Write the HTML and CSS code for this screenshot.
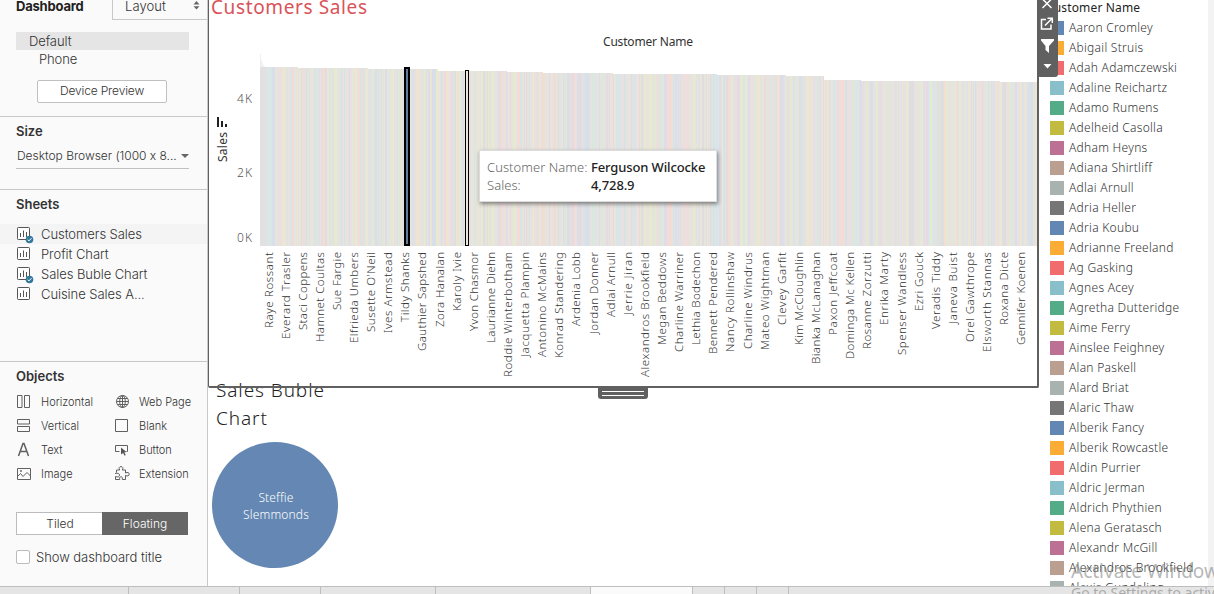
FILE: index.html
```
<!DOCTYPE html>
<html lang="en">
<head>
<meta charset="utf-8">
<title>Dashboard</title>
<link rel="stylesheet" href="styles.css">
</head>
<body>
<div class="app">
  <div class="workspace">
    <aside class="sidebar">
      <section class="panel panel-device">
        <div class="tabs">
          <div class="tab-active">Dashboard</div>
          <div class="tab-layout"><span>Layout</span>
            <svg width="7" height="9" viewBox="0 0 7 9"><path d="M3.5 0L6.5 3.4H.5zM3.5 8.6L6.5 5.2H.5z" fill="#666"/></svg>
          </div>
        </div>
        <div class="device selected">Default</div>
        <div class="device phone">Phone</div>
        <div class="preview">Device Preview</div>
      </section>
      <section class="panel panel-size">
        <h2>Size</h2>
        <div class="select"><span>Desktop Browser (1000 x 8...</span><i class="caret"></i></div>
      </section>
      <section class="panel panel-sheets">
        <h2>Sheets</h2>
        <div class="sheet hover"><svg class="ic"><use href="#sheet"/><use href="#check"/></svg><span>Customers Sales</span></div>
        <div class="sheet"><svg class="ic"><use href="#sheet"/></svg><span>Profit Chart</span></div>
        <div class="sheet"><svg class="ic"><use href="#sheet"/><use href="#check"/></svg><span>Sales Buble Chart</span></div>
        <div class="sheet"><svg class="ic"><use href="#sheet"/></svg><span>Cuisine Sales A...</span></div>
      </section>
      <section class="panel panel-objects">
        <h2>Objects</h2>
        <div class="objects">
          <div class="object"><svg class="ic line"><path d="M1.500 1.500h4.500v12h-4.500zM8.500 1.500h5v12h-5z"/></svg>Horizontal</div>
          <div class="object"><svg class="ic line"><circle cx="8.500" cy="7.500" r="6"/><ellipse cx="8.500" cy="7.500" rx="2.800" ry="6"/><path d="M2.500 7.500h12M3.500 4.500h10M3.500 10.500h10M8.500 1.500v12"/></svg>Web Page</div>
          <div class="object"><svg class="ic line"><path d="M1.500 1.500h12v4.500h-12zM1.500 8.500h12v5h-12z"/></svg>Vertical</div>
          <div class="object"><svg class="ic line"><path d="M1.500 1.500h12v12h-12z"/></svg>Blank</div>
          <div class="object"><svg class="ic line letter"><path d="M2.500 14L7 1.500h1L12.500 14M4.300 9.500h6.400"/></svg>Text</div>
          <div class="object"><svg class="ic line"><path d="M5.500 9.500h-4v-6h12v6h-1"/><path d="M7 5.500l5.500 4.500-2.200.4 1.500 2.600-1.200.7-1.500-2.700L7 12.500z" fill="#555" stroke="none"/></svg>Button</div>
          <div class="object"><svg class="ic line"><path d="M1.500 2.500h13v11h-13zM1.500 10.500l3-3 2.500 3 4-4 3.500 3.500"/><circle cx="5" cy="5" r=".6"/></svg>Image</div>
          <div class="object"><svg class="ic line"><path d="M2.500 6.500V4h3.200C4.500 1.900 5.300.6 7 .6s2.500 1.300 1.300 3.400H11.500v3c2-1.100 3.700-.5 3.700 1.200s-1.700 2.300-3.700 1.200V13.500H8.300C8.600 11.500 8 10.700 7 10.700s-1.600.8-1.300 2.800H1.500v-3c2.500 1 4 .3 4-1.300S4 6.700 1 7.500"/></svg>Extension</div>
        </div>
        <div class="toggle"><span>Tiled</span><span class="on">Floating</span></div>
        <div class="show-title"><i class="box"></i>Show dashboard title</div>
      </section>
    </aside>

    <main class="dashboard">
      <div class="sheets-col">
        <div class="card">
          <svg class="chart" id="chart" width="828" height="386" viewBox="209 0 828 386">
            <text class="title" x="211" y="14" textLength="156">Customers Sales</text>
            <text class="axis-name" x="603" y="46" textLength="90">Customer Name</text>
            <text class="tick" x="237" y="103" textLength="15">4K</text>
            <text class="tick" x="237" y="177" textLength="15">2K</text>
            <text class="tick" x="237" y="242" textLength="15">0K</text>
            <text class="axis-name" transform="translate(227 162) rotate(-90)" textLength="30">Sales</text>
            <path d="M217 117h2v10h-2zM221 121h2v6h-2zM225 124h2v3h-2z" fill="#222"/>
            <g id="bars"></g>
            <g id="labels"></g>
          </svg>
          <div class="grip"><i></i><i></i></div>
          <div class="toolbar">
            <svg width="20" height="77" viewBox="0 0 20 77" fill="none" stroke="#fff" stroke-width="1.500">
              <path d="M5.500 -1l9 9M14.500 -1L5.500 8"/>
              <path d="M9 19.500H4.500v9.500h9.500v-4.500M8 25.500L14.500 19M10.500 18.300H15.300V23"/>
              <path d="M4 39h13v1.500L12 46v7l-3.500-3v-4L4 40.500z" fill="#fff" stroke="none"/>
              <path d="M6.500 64h8l-4 4.500z" fill="#fff" stroke="none"/>
            </svg>
          </div>
          <div class="tooltip">
            <span class="key">Customer Name:</span><b>Ferguson Wilcocke</b>
            <span class="key">Sales:</span><b>4,728.9</b>
          </div>
        </div>
        <div class="bubble-sheet">
          <h3>Sales Buble<br>Chart</h3>
          <div class="bubble">Steffie<br>Slemmonds</div>
        </div>
      </div>
      <div class="legend" id="legend"><div class="legend-title">Customer Name</div></div>
      <div class="gutter"></div>
    </main>
  </div>
  <footer class="strip"><i></i><i></i><i></i><i></i><i></i><i class="current"></i><i></i><i></i><i></i></footer>
  <div class="watermark"><div class="wm-big">Activate Windows</div><div class="wm-small">Go to Settings to activate Windows.</div></div>
</div>
<svg class="defs">
  <symbol id="sheet" viewBox="0 0 16 18" width="16" height="18"><rect x="1.500" y="1.500" width="12" height="12" rx=".8" fill="#fff" stroke="#555"/><path d="M4.500 7v4M7.500 4.500v6.500M10.500 6v5" stroke="#555"/></symbol>
  <symbol id="check" viewBox="0 0 18 18" width="18" height="18"><circle cx="13.500" cy="13.500" r="3.800" fill="#33799b"/><path d="M11.700 13.600l1.300 1.300 2.500-2.700" fill="none" stroke="#fff"/></symbol>
</svg>
<script src="chart.js"></script>
</body>
</html>
```
FILE: styles.css
```
* { box-sizing: border-box; }
body { margin: 0; width: 1214px; height: 594px; overflow: hidden; font-family: "Noto Sans", "Open Sans", sans-serif; font-size: 12px; color: #333; background: #fff; }
h2, h3 { margin: 0; }
.app { position: relative; height: 594px; display: flex; flex-direction: column; }
.workspace { display: flex; height: 586px; }
.defs { position: absolute; width: 0; height: 0; }

.sidebar { width: 208px; flex: none; background: #fafafa; border-right: 1px solid #c8c8c8; font-family: Inter, "Open Sans", sans-serif; font-feature-settings: "calt" 0; font-size: 12px; font-weight: 300; color: #333; }
.sidebar h2 { font-size: 13px; line-height: 18px; font-weight: 600; color: #333; }
.panel { border-bottom: 1px solid #c8c8c8; padding: 0 18px 0 16px; }
.panel-device { height: 117px; padding-right: 0; }
.tabs { display: flex; height: 20px; }
.tab-active { width: 96px; font-weight: 700; font-size: 13px; line-height: 13px; letter-spacing: -.2px; color: #222; }
.tab-layout { flex: 1; display: flex; justify-content: space-between; align-items: flex-start; border-left: 1px solid #c8c8c8; border-bottom: 1px solid #c8c8c8; padding: 0 7px 0 12px; font-size: 13px; line-height: 13px; letter-spacing: .1px; }
.tab-layout svg { margin-top: 1px; }
.device { font-size: 13px; line-height: 18px; width: 173px; padding-left: 13px; letter-spacing: -.1px; }
.selected { background: #e5e5e5; margin-top: 12px; }
.phone { padding-left: 23px; }
.preview { width: 130px; height: 23px; margin: 12px 0 0 21px; border: 1px solid #c0c0c0; border-radius: 2px; background: #fff; text-align: center; line-height: 20px; letter-spacing: -.15px; }
.panel-size { height: 73px; padding-top: 5px; }
.select { display: flex; justify-content: space-between; align-items: center; height: 20px; margin-top: 9px; padding: 0 0 6px 1px; border-bottom: 1px solid #c0c0c0; white-space: nowrap; letter-spacing: -.02px; }
.caret { border: 4px solid transparent; border-top-color: #666; border-bottom: 0; }
.panel-sheets { height: 172px; padding: 5px 0 0; }
.panel-sheets h2 { padding-left: 16px; margin-bottom: 11px; }
.sheet { display: flex; align-items: center; gap: 9px; height: 20px; padding-left: 16px; font-size: 13px; }
.sheet span { letter-spacing: -.06px; }
.sheet.hover { background: #f4f4f4; }
.sheet .ic { height: 18px; margin-top: 1px; }
.ic { width: 16px; height: 16px; flex: none; overflow: visible; }
.line { fill: none; stroke: #606060; stroke-width: 1; }
.letter { stroke-width: 1.5; }
.panel-objects { border-bottom: 0; padding-top: 5px; }
.objects { display: grid; grid-template-columns: 98px 90px; grid-auto-rows: 24px; margin-top: 5px; }
.object { display: flex; align-items: center; gap: 9px; font-size: 11px; white-space: nowrap; }
.toggle { display: flex; width: 172px; height: 23px; margin-top: 26px; border: 1px solid #bcbcbc; background: #fff; text-align: center; line-height: 21px; }
.toggle span { flex: 1; }
.toggle .on { background: #666; color: #fff; margin: -1px; line-height: 23px; }
.show-title { display: flex; align-items: center; gap: 6px; margin-top: 13px; font-size: 13px; letter-spacing: -.05px; height: 18px; white-space: nowrap; }
.box { width: 14px; height: 14px; border: 1px solid #bbb; border-radius: 2px; background: #fff; }

.dashboard { display: flex; flex: 1; overflow: hidden; }
.sheets-col { width: 831px; flex: none; }
.card { position: relative; z-index: 2; width: 831px; height: 388px; border: 2px solid #606060; border-top: 0; border-left-width: 1px; border-radius: 0 0 2px 2px; }
.chart { display: block; }
.title { font-size: 19px; font-weight: 450; fill: #d9535a; }
.axis-name { font-size: 12px; fill: #333; }
.tick { font-size: 12px; font-weight: 300; fill: #555; }
.label { font-size: 11.5px; font-weight: 300; fill: #333; }
.grip { position: absolute; left: 389px; top: 387px; width: 50px; height: 12px; background: #606060; border-radius: 0 0 3px 3px; padding: 4px; display: grid; gap: 3px; }
.grip i { height: 1px; background: #fff; }
.toolbar { position: absolute; left: 828px; top: 0; width: 21px; height: 77px; background: #606060; border-radius: 0 0 3px 3px; }
.toolbar svg { display: block; }
.tooltip { position: absolute; left: 270px; top: 150px; width: 238px; height: 52px; background: #fff; border: 1px solid #ddd; box-shadow: 1px 2px 4px rgba(0,0,0,.45); padding: 7px; display: grid; grid-template-columns: 104px auto; grid-auto-rows: 18px; line-height: 18px; font-size: 13px; white-space: nowrap; }
.tooltip .key { color: #666; font-weight: 300; letter-spacing: .05px; }
.tooltip b { font-weight: 500; color: #222; letter-spacing: -.12px; }
.bubble-sheet { margin-top: -12px; padding-left: 4px; }
.bubble-sheet h3 { font-size: 19px; font-weight: 300; line-height: 28px; padding-left: 4px; letter-spacing: .9px; color: #222; }
.bubble { display: flex; align-items: center; width: 126px; height: 126px; margin-top: 10px; border-radius: 50%; background: #6488b3; color: #fff; font-weight: 300; text-align: center; justify-content: center; line-height: 17px; padding: 1px 0 0 2px; letter-spacing: .15px; }
.legend { flex: 1; padding-left: 11px; white-space: nowrap; overflow: hidden; letter-spacing: .28px; font-weight: 350; }
.legend-title { height: 18px; line-height: 16px; color: #222; font-weight: 400; letter-spacing: -.1px; padding-left: 0; margin-left: -4px; letter-spacing: .15px; }
.entry { display: flex; align-items: center; gap: 5px; height: 20px; line-height: 18px; }
.entry .swatch { width: 14px; height: 14px; margin-top: -1px; }
.entry span { margin-top: -1px; }
.gutter { width: 6px; background: #f3f3f3; }
.strip { display: flex; height: 8px; border-top: 1px solid #bebebe; background: #e5e5e5; }
.strip i { border-right: 1px solid #bebebe; width: 32px; }
.strip i:nth-child(1) { width: 129px; }
.strip i:nth-child(2) { width: 111px; }
.strip i:nth-child(3) { width: 81px; }
.strip i:nth-child(4) { width: 115px; }
.strip i:nth-child(5) { width: 155px; }
.strip i.current { width: 102px; background: #fafafa; }
.watermark { position: absolute; left: 1071px; top: 560px; width: 143px; height: 34px; overflow: hidden; white-space: nowrap; color: rgba(110,110,110,.5); }
.wm-big { font-size: 19px; line-height: 22px; }
.wm-small { font-size: 14px; line-height: 22px; }
```
FILE: chart.js
```
const NS = 'http://www.w3.org/2000/svg';
function add(parent, tag, attrs, text) {
  const el = document.createElementNS(NS, tag);
  for (const k in attrs) el.setAttribute(k, attrs[k]);
  if (text) el.textContent = text;
  parent.appendChild(el);
}

// Bar heights fall in small steps; each entry is [start x, top y].
const steps = [[260, 54], [261, 60], [262, 63], [263, 65], [264, 66], [265, 67], [298, 68], [368, 69], [438, 71], [507, 72], [543, 73], [613, 74], [717, 75], [786, 76], [824, 80], [861, 81], [1000, 82]];
const tints = ['#e1e1e3', '#dbe3e4', '#ebe2dc', '#d8dfe8', '#e9e9d2', '#e7dae5', '#f3dcd6', '#d7e6e8', '#dfe7dc', '#efe4cf', '#e5e3e0', '#dfdedf', '#ebe0e1', '#e3e6de', '#e4e3e1', '#e9e5d8'];
const bars = document.getElementById('bars');
let seed = 29;
function random() {
  seed = (seed * 1103515245 + 12345) % 2147483648;
  return Math.floor(seed / 65536);
}
let tint = tints[0];
for (let x = 260; x < 1037; x++) {
  const top = steps.filter(s => s[0] <= x).pop()[1];
  const shape = x < 265 ? '#f0f0f0' : null;
  if (!shape && random() % 10 < 7) tint = tints[random() % tints.length];
  add(bars, 'rect', { x, y: top, width: 1, height: 246 - top, fill: tint });
  if (shape) add(bars, 'rect', { x, y: top, width: 1, height: 67 - top, fill: shape });
}
add(bars, 'rect', { x: 405, y: 68, width: 4, height: 177, fill: '#5f7e99', stroke: '#000', 'stroke-width': 2 });
add(bars, 'rect', { x: 465.5, y: 70.5, width: 3, height: 175, fill: '#e8e8e8', stroke: '#000' });

// Axis labels with their drawn lengths.
const names = [['Raye Rossant', 76], ['Everard Trasler', 87], ['Staci Coppens', 78], ['Hamnet Coultas', 90], ['Sue Fargie', 58], ['Elfrieda Umbers', 91], ["Susette O'Neil", 80], ['Ives Armstead', 81], ['Tildy Shanks', 70], ['Gauthier Sapshed', 99], ['Zora Hanalan', 75], ['Karoly Ivie', 59], ['Yvon Chasmor', 79], ['Laurianne Diehn', 91], ['Roddie Winterbotham', 125], ['Jacquetta Plampin', 105], ['Antonino McMains', 105], ['Konrad Standering', 106], ['Ardenia Lobb', 74], ['Jordan Donner', 82], ['Adlai Arnull', 65], ['Jerrie Jiran', 63], ['Alexandros Brookfield', 125], ['Megan Beddows', 93], ['Charline Warriner', 100], ['Lethia Bodechon', 93], ['Bennett Pendered', 102], ['Nancy Rollinshaw', 100], ['Charline Windrus', 97], ['Mateo Wightman', 98], ['Clevey Garfit', 73], ['Kim McCloughlin', 93], ['Bianka McLanaghan', 112], ['Paxon Jeffcoat', 83], ['Dominga Mc Kellen', 107], ['Rosanne Zorzutti', 97], ['Enrika Marty', 73], ['Spenser Wandless', 103], ['Ezri Gouck', 59], ['Veradis Tiddy', 77], ['Janeva Buist', 72], ['Orel Gawthrope', 90], ['Elsworth Stannas', 100], ['Roxana Dicte', 73], ['Gennifer Koenen', 93]];
const labels = document.getElementById('labels');
names.forEach(([name, len], i) => {
  add(labels, 'text', { class: 'label', transform: `translate(${272.5 + i * 17.11} ${252 + len}) rotate(-90)`, textLength: len }, name);
});

const customers = ['Aaron Cromley', 'Abigail Struis', 'Adah Adamczewski', 'Adaline Reichartz', 'Adamo Rumens', 'Adelheid Casolla', 'Adham Heyns', 'Adiana Shirtliff', 'Adlai Arnull', 'Adria Heller', 'Adria Koubu', 'Adrianne Freeland', 'Ag Gasking', 'Agnes Acey', 'Agretha Dutteridge', 'Aime Ferry', 'Ainslee Feighney', 'Alan Paskell', 'Alard Briat', 'Alaric Thaw', 'Alberik Fancy', 'Alberik Rowcastle', 'Aldin Purrier', 'Aldric Jerman', 'Aldrich Phythien', 'Alena Geratasch', 'Alexandr McGill', 'Alexandros Brookfield', 'Alexis Gundeling'];
const palette = ['#6287b3', '#fcab34', '#f16c6d', '#89bfca', '#54ab87', '#c2bb3f', '#bc7093', '#ba9e90', '#a8b3b0', '#767676'];
const legend = document.getElementById('legend');
customers.forEach((name, i) => {
  const row = document.createElement('div');
  row.className = 'entry';
  row.innerHTML = `<i class="swatch" style="background:${palette[i % 10]}"></i><span>${name}</span>`;
  legend.appendChild(row);
});
```
